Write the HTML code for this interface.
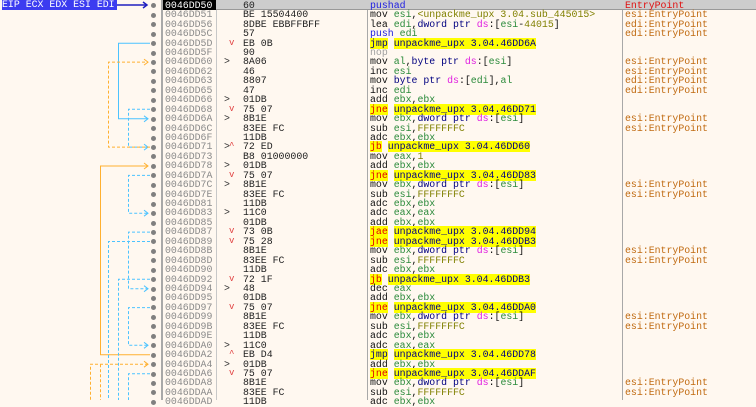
<!DOCTYPE html>
<html><head><meta charset="utf-8"><style>
*{margin:0;padding:0;box-sizing:border-box}
body{width:756px;height:400px;overflow:hidden;background:#fff8f0;font-family:"Liberation Mono",monospace;font-size:9.9px;position:relative}
.r{position:absolute;left:0;width:756px;height:9.44px;line-height:9.44px;white-space:pre}
.r span{position:absolute}
.dot{left:151px;top:2.6px;width:5px;height:5px;border-radius:50%;background:#808080}
.a{left:165px;color:#8a8a8a}
.m{left:224px;color:#333}
.v{left:229px;color:#e04040;font-size:9px}
.b{left:243px;color:#222}
.d{left:370px;color:#111}
.c{left:625px;color:#c06a10}
.g{color:#2a8a3a}.o{color:#808000}.p{color:#e020e0}.n{color:#000080}.bl{color:#2020e0}.rd{color:#e00000}.gr{color:#a0a0a0}
.y{background:#ffff00}
i{font-style:normal}
</style></head><body>
<div style="position:absolute;left:161px;top:0;width:2px;height:400px;background:#a8a8a8"></div>
<div style="position:absolute;left:216px;top:0;width:1px;height:400px;background:#c8c8c8"></div>
<div style="position:absolute;left:367px;top:0;width:1px;height:400px;background:#a8a8a8"></div>
<div style="position:absolute;left:622px;top:0;width:1px;height:400px;background:#a8a8a8"></div>
<div style="position:absolute;left:163px;top:0;width:593px;height:10px;background:#cdcdcd;border-bottom:1px solid #999"></div>
<div style="position:absolute;left:163px;top:0;width:53px;height:10px;background:#000"></div>
<div style="position:absolute;left:2px;top:0;width:115px;height:10px;background:#3c3cf0;color:#fff;line-height:10px;font-size:9.9px;white-space:pre">EIP ECX EDX ESI EDI</div>
<svg width="756" height="400" style="position:absolute;left:0;top:0">
<g fill="none" stroke-width="1">
<line x1="117" y1="5" x2="146" y2="5" stroke="#2020c0" stroke-width="1.5"/>
<path d="M143,2 L147,5 L143,8" stroke="#2020c0" stroke-width="1.5"/>
<path d="M150,43.3 H118.5 V118.8 H148" stroke="#4cc3ff"/>
<path d="M144,115.8 L148,118.8 L144,121.8" stroke="#4cc3ff"/>
<path d="M150,109.3 H128.5 V147.1 H148" stroke="#4cc3ff" stroke-dasharray="3,2"/>
<path d="M144,144.1 L148,147.1 L144,150.1" stroke="#4cc3ff"/>
<path d="M150,147.1 H108.5 V62.1 H148" stroke="#ffb030" stroke-dasharray="3,2"/>
<path d="M144,59.1 L148,62.1 L144,65.1" stroke="#ffb030"/>
<path d="M150,354.8 H100.5 V166 H148" stroke="#ffb030"/>
<path d="M144,163 L148,166 L144,169" stroke="#ffb030"/>
<path d="M150,175.4 H128.5 V213.2 H148" stroke="#4cc3ff" stroke-dasharray="3,2"/>
<path d="M144,210.2 L148,213.2 L144,216.2" stroke="#4cc3ff"/>
<path d="M150,232.1 H128.5 V288.7 H148" stroke="#4cc3ff" stroke-dasharray="3,2"/>
<path d="M144,285.7 L148,288.7 L144,291.7" stroke="#4cc3ff"/>
<path d="M150,241.5 H108.5 V400" stroke="#4cc3ff" stroke-dasharray="3,2"/>
<path d="M150,279.3 H118.5 V400" stroke="#4cc3ff" stroke-dasharray="3,2"/>
<path d="M150,307.6 H128.5 V345.3 H148" stroke="#4cc3ff" stroke-dasharray="3,2"/>
<path d="M144,342.3 L148,345.3 L144,348.3" stroke="#4cc3ff"/>
<path d="M148,364.2 H90.5 V400" stroke="#ffb030" stroke-dasharray="3,2"/>
<path d="M100.5,364.2 V400" stroke="#ffb030" stroke-dasharray="3,2"/>
<path d="M144,361.2 L148,364.2 L144,367.2" stroke="#ffb030"/>
<path d="M150,373.7 H128.5 V400" stroke="#4cc3ff" stroke-dasharray="3,2"/>
</g></svg>

<div class="r" style="top:0.8px"><span class="dot"></span><span class="a" style="color:#fff">0046DD50</span><span class="b">60</span><span class="d"><i class="bl">pushad</i></span><span class="c" style="color:#e01010">EntryPoint</span></div>
<div class="r" style="top:10.24px"><span class="dot"></span><span class="a">0046DD51</span><span class="b">BE 15504400</span><span class="d">mov <i class="g">esi</i>,<i class="o">&lt;unpackme_upx 3.04.sub_445015&gt;</i></span><span class="c">esi:EntryPoint</span></div>
<div class="r" style="top:19.68px"><span class="dot"></span><span class="a">0046DD56</span><span class="b">8DBE EBBFFBFF</span><span class="d">lea <i class="g">edi</i>,<i class="n">dword ptr</i> <i class="p">ds</i>:[<i class="g">esi</i>-<i class="o">44015</i>]</span><span class="c">edi:EntryPoint</span></div>
<div class="r" style="top:29.12px"><span class="dot"></span><span class="a">0046DD5C</span><span class="b">57</span><span class="d"><i class="bl">push</i> <i class="g">edi</i></span><span class="c">edi:EntryPoint</span></div>
<div class="r" style="top:38.56px"><span class="dot"></span><span class="a">0046DD5D</span><span class="v">v</span><span class="b">EB 0B</span><span class="d"><i class="y n">jmp</i> <i class="y n">unpackme_upx 3.04.46DD6A</i></span></div>
<div class="r" style="top:48px"><span class="dot"></span><span class="a">0046DD5F</span><span class="b">90</span><span class="d"><i class="gr">nop</i></span></div>
<div class="r" style="top:57.44px"><span class="dot"></span><span class="a">0046DD60</span><span class="m">&gt;</span><span class="b">8A06</span><span class="d">mov <i class="g">al</i>,<i class="n">byte ptr</i> <i class="p">ds</i>:[<i class="g">esi</i>]</span><span class="c">esi:EntryPoint</span></div>
<div class="r" style="top:66.88px"><span class="dot"></span><span class="a">0046DD62</span><span class="b">46</span><span class="d">inc <i class="g">esi</i></span><span class="c">esi:EntryPoint</span></div>
<div class="r" style="top:76.32px"><span class="dot"></span><span class="a">0046DD63</span><span class="b">8807</span><span class="d">mov <i class="n">byte ptr</i> <i class="p">ds</i>:[<i class="g">edi</i>],<i class="g">al</i></span><span class="c">edi:EntryPoint</span></div>
<div class="r" style="top:85.76px"><span class="dot"></span><span class="a">0046DD65</span><span class="b">47</span><span class="d">inc <i class="g">edi</i></span><span class="c">edi:EntryPoint</span></div>
<div class="r" style="top:95.2px"><span class="dot"></span><span class="a">0046DD66</span><span class="m">&gt;</span><span class="b">01DB</span><span class="d">add <i class="g">ebx</i>,<i class="g">ebx</i></span></div>
<div class="r" style="top:104.64px"><span class="dot"></span><span class="a">0046DD68</span><span class="v">v</span><span class="b">75 07</span><span class="d"><i class="y rd">jne</i> <i class="y n">unpackme_upx 3.04.46DD71</i></span></div>
<div class="r" style="top:114.08px"><span class="dot"></span><span class="a">0046DD6A</span><span class="m">&gt;</span><span class="b">8B1E</span><span class="d">mov <i class="g">ebx</i>,<i class="n">dword ptr</i> <i class="p">ds</i>:[<i class="g">esi</i>]</span><span class="c">esi:EntryPoint</span></div>
<div class="r" style="top:123.52px"><span class="dot"></span><span class="a">0046DD6C</span><span class="b">83EE FC</span><span class="d">sub <i class="g">esi</i>,<i class="o">FFFFFFFC</i></span><span class="c">esi:EntryPoint</span></div>
<div class="r" style="top:132.96px"><span class="dot"></span><span class="a">0046DD6F</span><span class="b">11DB</span><span class="d">adc <i class="g">ebx</i>,<i class="g">ebx</i></span></div>
<div class="r" style="top:142.4px"><span class="dot"></span><span class="a">0046DD71</span><span class="m">&gt;</span><span class="v">^</span><span class="b">72 ED</span><span class="d"><i class="y rd">jb</i> <i class="y n">unpackme_upx 3.04.46DD60</i></span></div>
<div class="r" style="top:151.84px"><span class="dot"></span><span class="a">0046DD73</span><span class="b">B8 01000000</span><span class="d">mov <i class="g">eax</i>,<i class="o">1</i></span></div>
<div class="r" style="top:161.28px"><span class="dot"></span><span class="a">0046DD78</span><span class="m">&gt;</span><span class="b">01DB</span><span class="d">add <i class="g">ebx</i>,<i class="g">ebx</i></span></div>
<div class="r" style="top:170.72px"><span class="dot"></span><span class="a">0046DD7A</span><span class="v">v</span><span class="b">75 07</span><span class="d"><i class="y rd">jne</i> <i class="y n">unpackme_upx 3.04.46DD83</i></span></div>
<div class="r" style="top:180.16px"><span class="dot"></span><span class="a">0046DD7C</span><span class="m">&gt;</span><span class="b">8B1E</span><span class="d">mov <i class="g">ebx</i>,<i class="n">dword ptr</i> <i class="p">ds</i>:[<i class="g">esi</i>]</span><span class="c">esi:EntryPoint</span></div>
<div class="r" style="top:189.6px"><span class="dot"></span><span class="a">0046DD7E</span><span class="b">83EE FC</span><span class="d">sub <i class="g">esi</i>,<i class="o">FFFFFFFC</i></span><span class="c">esi:EntryPoint</span></div>
<div class="r" style="top:199.04px"><span class="dot"></span><span class="a">0046DD81</span><span class="b">11DB</span><span class="d">adc <i class="g">ebx</i>,<i class="g">ebx</i></span></div>
<div class="r" style="top:208.48px"><span class="dot"></span><span class="a">0046DD83</span><span class="m">&gt;</span><span class="b">11C0</span><span class="d">adc <i class="g">eax</i>,<i class="g">eax</i></span></div>
<div class="r" style="top:217.92px"><span class="dot"></span><span class="a">0046DD85</span><span class="b">01DB</span><span class="d">add <i class="g">ebx</i>,<i class="g">ebx</i></span></div>
<div class="r" style="top:227.36px"><span class="dot"></span><span class="a">0046DD87</span><span class="v">v</span><span class="b">73 0B</span><span class="d"><i class="y rd">jae</i> <i class="y n">unpackme_upx 3.04.46DD94</i></span></div>
<div class="r" style="top:236.8px"><span class="dot"></span><span class="a">0046DD89</span><span class="v">v</span><span class="b">75 28</span><span class="d"><i class="y rd">jne</i> <i class="y n">unpackme_upx 3.04.46DDB3</i></span></div>
<div class="r" style="top:246.24px"><span class="dot"></span><span class="a">0046DD8B</span><span class="b">8B1E</span><span class="d">mov <i class="g">ebx</i>,<i class="n">dword ptr</i> <i class="p">ds</i>:[<i class="g">esi</i>]</span><span class="c">esi:EntryPoint</span></div>
<div class="r" style="top:255.68px"><span class="dot"></span><span class="a">0046DD8D</span><span class="b">83EE FC</span><span class="d">sub <i class="g">esi</i>,<i class="o">FFFFFFFC</i></span><span class="c">esi:EntryPoint</span></div>
<div class="r" style="top:265.12px"><span class="dot"></span><span class="a">0046DD90</span><span class="b">11DB</span><span class="d">adc <i class="g">ebx</i>,<i class="g">ebx</i></span></div>
<div class="r" style="top:274.56px"><span class="dot"></span><span class="a">0046DD92</span><span class="v">v</span><span class="b">72 1F</span><span class="d"><i class="y rd">jb</i> <i class="y n">unpackme_upx 3.04.46DDB3</i></span></div>
<div class="r" style="top:284px"><span class="dot"></span><span class="a">0046DD94</span><span class="m">&gt;</span><span class="b">48</span><span class="d">dec <i class="g">eax</i></span></div>
<div class="r" style="top:293.44px"><span class="dot"></span><span class="a">0046DD95</span><span class="b">01DB</span><span class="d">add <i class="g">ebx</i>,<i class="g">ebx</i></span></div>
<div class="r" style="top:302.88px"><span class="dot"></span><span class="a">0046DD97</span><span class="v">v</span><span class="b">75 07</span><span class="d"><i class="y rd">jne</i> <i class="y n">unpackme_upx 3.04.46DDA0</i></span></div>
<div class="r" style="top:312.32px"><span class="dot"></span><span class="a">0046DD99</span><span class="b">8B1E</span><span class="d">mov <i class="g">ebx</i>,<i class="n">dword ptr</i> <i class="p">ds</i>:[<i class="g">esi</i>]</span><span class="c">esi:EntryPoint</span></div>
<div class="r" style="top:321.76px"><span class="dot"></span><span class="a">0046DD9B</span><span class="b">83EE FC</span><span class="d">sub <i class="g">esi</i>,<i class="o">FFFFFFFC</i></span><span class="c">esi:EntryPoint</span></div>
<div class="r" style="top:331.2px"><span class="dot"></span><span class="a">0046DD9E</span><span class="b">11DB</span><span class="d">adc <i class="g">ebx</i>,<i class="g">ebx</i></span></div>
<div class="r" style="top:340.64px"><span class="dot"></span><span class="a">0046DDA0</span><span class="m">&gt;</span><span class="b">11C0</span><span class="d">adc <i class="g">eax</i>,<i class="g">eax</i></span></div>
<div class="r" style="top:350.08px"><span class="dot"></span><span class="a">0046DDA2</span><span class="v">^</span><span class="b">EB D4</span><span class="d"><i class="y n">jmp</i> <i class="y n">unpackme_upx 3.04.46DD78</i></span></div>
<div class="r" style="top:359.52px"><span class="dot"></span><span class="a">0046DDA4</span><span class="m">&gt;</span><span class="b">01DB</span><span class="d">add <i class="g">ebx</i>,<i class="g">ebx</i></span></div>
<div class="r" style="top:368.96px"><span class="dot"></span><span class="a">0046DDA6</span><span class="v">v</span><span class="b">75 07</span><span class="d"><i class="y rd">jne</i> <i class="y n">unpackme_upx 3.04.46DDAF</i></span></div>
<div class="r" style="top:378.4px"><span class="dot"></span><span class="a">0046DDA8</span><span class="b">8B1E</span><span class="d">mov <i class="g">ebx</i>,<i class="n">dword ptr</i> <i class="p">ds</i>:[<i class="g">esi</i>]</span><span class="c">esi:EntryPoint</span></div>
<div class="r" style="top:387.84px"><span class="dot"></span><span class="a">0046DDAA</span><span class="b">83EE FC</span><span class="d">sub <i class="g">esi</i>,<i class="o">FFFFFFFC</i></span><span class="c">esi:EntryPoint</span></div>
<div class="r" style="top:397.28px"><span class="dot"></span><span class="a">0046DDAD</span><span class="b">11DB</span><span class="d">adc <i class="g">ebx</i>,<i class="g">ebx</i></span></div>
</body></html>
